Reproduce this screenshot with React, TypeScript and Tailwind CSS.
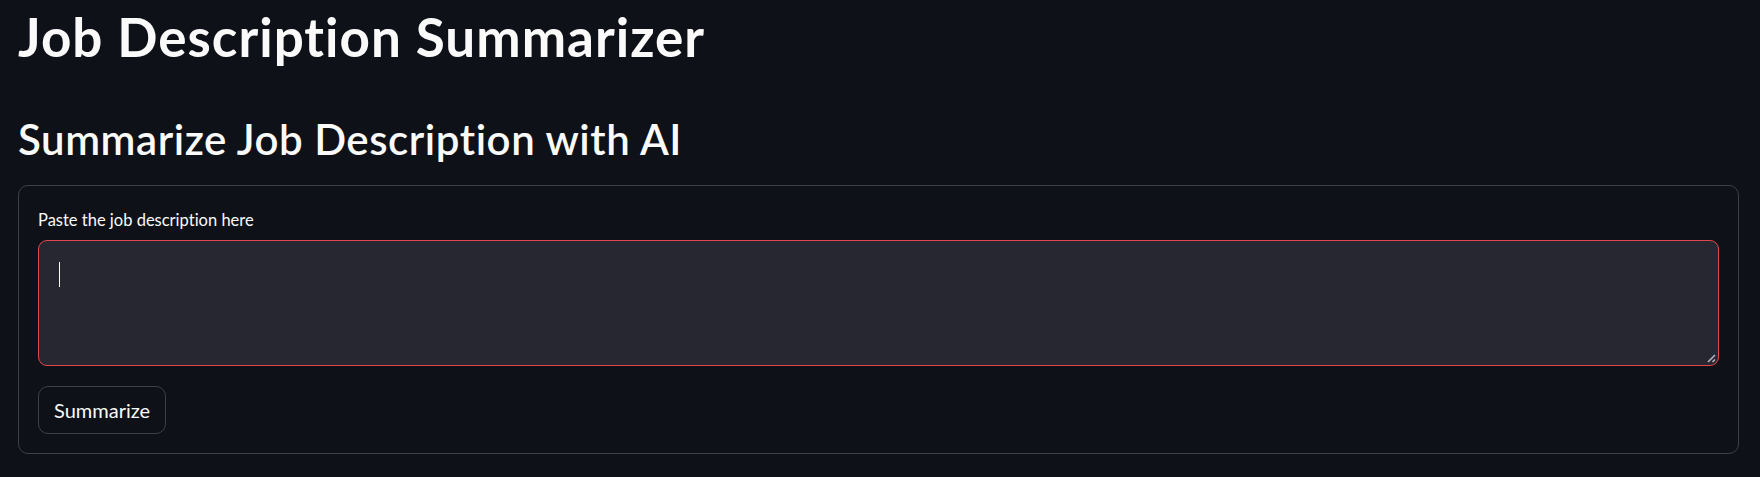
import React from "react";

const font = { fontFamily: "Lato, 'Noto Sans', sans-serif" };

export default function App() {
  return (
    <div
      className="w-[1760px] h-[477px] overflow-hidden bg-[#0e1117] text-[#fafafa] pl-[18px] pr-[21px] pt-[5px] [font-variant-ligatures:none]"
      style={font}
    >
      <h1 className="text-[53px] leading-[1.2] font-bold tracking-[1px]">Job Description Summarizer</h1>
      <h2 className="mt-[45px] text-[42px] leading-[1.2] font-semibold tracking-[0.55px]">
        Summarize Job Description with AI
      </h2>

      {/* form */}
      <div className="mt-[21px] border border-[#3d4046] rounded-[10px] px-[19px] pt-[24px] pb-[19px]">
        <label className="block text-[16.5px] leading-[21px]">Paste the job description here</label>
        <div className="relative mt-[9px] h-[126px] rounded-[9px] border border-[#e2474d] bg-[#262730] pl-[20px] pt-[21px]">
          <span className="block w-px h-[25px] bg-[#fafafa]" />
          <svg
            className="absolute right-[2px] bottom-[2px]"
            width="10"
            height="10"
            viewBox="0 0 10 10"
          >
            <path d="M9 2 L2 9" stroke="#b4b4bb" strokeWidth="1.6" />
            <path d="M9 6.5 L6.5 9" stroke="#b4b4bb" strokeWidth="1.6" />
          </svg>
        </div>
        <button className="mt-[20px] h-[48px] px-[15px] rounded-[10px] border border-[#3d4046] bg-[#0e1117] text-[20px] text-[#fafafa]">
          Summarize
        </button>
      </div>
    </div>
  );
}
